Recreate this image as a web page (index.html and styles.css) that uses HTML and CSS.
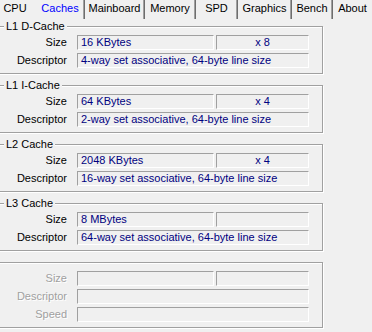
FILE: index.html
```
<!DOCTYPE html>
<html lang="en">
<head>
  <meta charset="UTF-8">
  <title>CPU-Z - Caches</title>
  <link rel="stylesheet" href="styles.css">
</head>
<body>
<div class="tabs">
  <div class="tab tab-cpu">CPU</div>
  <div class="tab tab-caches active sep">Caches</div>
  <div class="tab tab-mainboard sep">Mainboard</div>
  <div class="tab tab-memory sep">Memory</div>
  <div class="tab tab-spd sep">SPD</div>
  <div class="tab tab-graphics sep">Graphics</div>
  <div class="tab tab-bench sep">Bench</div>
  <div class="tab tab-about">About</div>
</div>
<div class="panel">
  <fieldset class="group">
    <legend>L1 D-Cache</legend>
    <div class="rows">
      <div class="row"><span class="label">Size</span><span class="field field-main">16 KBytes</span><span class="field field-count">x 8</span></div>
      <div class="row"><span class="label">Descriptor</span><span class="field field-wide">4-way set associative, 64-byte line size</span></div>
    </div>
  </fieldset>
  <fieldset class="group">
    <legend>L1 I-Cache</legend>
    <div class="rows">
      <div class="row"><span class="label">Size</span><span class="field field-main">64 KBytes</span><span class="field field-count">x 4</span></div>
      <div class="row"><span class="label">Descriptor</span><span class="field field-wide">2-way set associative, 64-byte line size</span></div>
    </div>
  </fieldset>
  <fieldset class="group">
    <legend>L2 Cache</legend>
    <div class="rows">
      <div class="row"><span class="label">Size</span><span class="field field-main">2048 KBytes</span><span class="field field-count">x 4</span></div>
      <div class="row"><span class="label">Descriptor</span><span class="field field-wide">16-way set associative, 64-byte line size</span></div>
    </div>
  </fieldset>
  <fieldset class="group">
    <legend>L3 Cache</legend>
    <div class="rows">
      <div class="row"><span class="label">Size</span><span class="field field-main">8 MBytes</span><span class="field field-count"></span></div>
      <div class="row"><span class="label">Descriptor</span><span class="field field-wide">64-way set associative, 64-byte line size</span></div>
    </div>
  </fieldset>
  <fieldset class="group disabled">
    <legend class="empty"></legend>
    <div class="rows">
      <div class="row"><span class="label">Size</span><span class="field field-main"></span><span class="field field-count"></span></div>
      <div class="row"><span class="label">Descriptor</span><span class="field field-wide"></span></div>
      <div class="row"><span class="label">Speed</span><span class="field field-wide"></span></div>
    </div>
  </fieldset>
</div>
</body>
</html>
```

FILE: styles.css
```
body { margin: 0; background: #f0f0f0; color: #000; font-family: "Liberation Sans", Arial, sans-serif; font-size: 11px; overflow: hidden; }

/* tab strip */
.tabs { display: flex; height: 19px; }
.tab { box-sizing: border-box; height: 19px; line-height: 17px; text-align: center; white-space: nowrap; }
.tab.sep { border-right: 1px solid #6e6e6e; box-shadow: inset -1px 0 0 #a0a0a0; }
.tab.active { color: #0000ff; }
.tab-cpu { width: 42px; margin-left: -6px; }
.tab-caches { width: 49px; }
.tab-mainboard { width: 60px; }
.tab-memory { width: 51px; }
.tab-spd { width: 42px; }
.tab-graphics { width: 54px; }
.tab-bench { width: 41px; }
.tab-about { width: 39px; }

/* group boxes */
.panel { padding-top: 1px; }
.group { margin: 0 49px 5px -2px; padding: 2px 0 5px 0; min-width: 0; border: 1px solid #a0a0a0; box-shadow: 1px 1px 0 #fff, inset 1px 1px 0 #fff; }
.group legend { margin-left: 5px; padding: 0 2px; line-height: 13px; background: #f0f0f0; }
.group legend.empty { width: 0; height: 13px; padding: 0; }
.rows { display: flex; flex-direction: column; gap: 3px; }
.row { display: flex; height: 15px; }
.label { width: 68px; margin-right: 10px; line-height: 15px; text-align: right; }
.field { box-sizing: border-box; height: 15px; padding: 0 3px; line-height: 13px; color: #000080; white-space: nowrap; overflow: hidden; border-top: 1px solid #a0a0a0; border-left: 1px solid #a0a0a0; border-right: 1px solid #fff; border-bottom: 1px solid #fff; }
.field-main { width: 137px; margin-right: 2px; }
.field-count { width: 93px; text-align: center; }
.field-wide { width: 232px; }
.disabled .label { color: #a0a0a0; text-shadow: 1px 1px 0 #fff; }
```
